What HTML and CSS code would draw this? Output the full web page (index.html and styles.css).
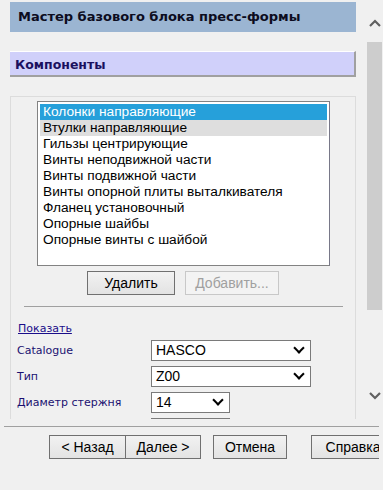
FILE: index.html
```html
<!DOCTYPE html>
<html lang="ru">
<head>
    <meta charset="UTF-8">
    <title>Мастер базового блока пресс-формы</title>
    <link rel="stylesheet" href="styles.css">
</head>
<body>
    <div class="top">
        <div class="main">
            <div class="title">Мастер базового блока пресс-формы</div>
            <div class="section">Компоненты</div>
            <div class="panel">
                <div class="listbox">
                    <div class="item selected">Колонки направляющие</div>
                    <div class="item hover">Втулки направляющие</div>
                    <div class="item">Гильзы центрирующие</div>
                    <div class="item">Винты неподвижной части</div>
                    <div class="item">Винты подвижной части</div>
                    <div class="item">Винты опорной плиты выталкивателя</div>
                    <div class="item">Фланец установочный</div>
                    <div class="item">Опорные шайбы</div>
                    <div class="item">Опорные винты с шайбой</div>
                </div>
                <div class="list-buttons">
                    <button class="btn btn-del">Удалить</button>
                    <button class="btn btn-add" disabled>Добавить...</button>
                </div>
                <div class="sep"></div>
                <a class="show-link" href="#">Показать</a>
                <div class="field">
                    <span class="label">Catalogue</span>
                    <div class="select wide">HASCO<span class="chev"></span></div>
                </div>
                <div class="field">
                    <span class="label">Тип</span>
                    <div class="select wide">Z00<span class="chev"></span></div>
                </div>
                <div class="field">
                    <span class="label">Диаметр стержня</span>
                    <div class="select narrow">14<span class="chev"></span></div>
                </div>
                <div class="field">
                    <span class="label"></span>
                    <div class="select narrow"></div>
                </div>
            </div>
        </div>
        <div class="scrollbar">
            <svg class="arrow up" width="12" height="8" viewBox="0 0 12 8"><path d="M1 7 L6 2 L11 7" fill="none" stroke="#606060" stroke-width="2.2"/></svg>
            <div class="track"><div class="thumb"></div></div>
            <svg class="arrow down" width="12" height="8" viewBox="0 0 12 8"><path d="M1 1 L6 6 L11 1" fill="none" stroke="#606060" stroke-width="2.2"/></svg>
        </div>
    </div>
    <div class="footer">
        <div class="footer-line"></div>
        <div class="footer-buttons">
            <button class="btn fbtn">&lt; Назад</button>
            <button class="btn fbtn next">Далее &gt;</button>
            <button class="btn fbtn cancel">Отмена</button>
            <button class="btn fbtn help">Справка</button>
        </div>
    </div>
</body>
</html>
```

FILE: styles.css
```css
body {
    margin: 0;
    background-color: #f0f0f0;
    font-family: "Liberation Sans", Arial, sans-serif;
    width: 383px;
    height: 490px;
    overflow: hidden;
}
.top {
    display: flex;
    height: 419px;
}
.main {
    width: 346px;
    flex-shrink: 0;
    padding: 2px 10px 0 10px;
    overflow: hidden;
}
.title {
    height: 30px;
    line-height: 30px;
    padding-left: 8px;
    background-color: #9bb5d2;
    color: #0c0c20;
    font-family: "DejaVu Sans", Verdana, sans-serif;
    font-weight: bold;
    font-size: 13px;
}
.section {
    margin-top: 19px;
    height: 26px;
    line-height: 25px;
    padding-left: 5px;
    box-sizing: border-box;
    background-color: #d0d0fa;
    border-top: 1px solid #ffffff;
    border-bottom: 2px solid #a0a0a0;
    border-right: 2px solid #a0a0a0;
    color: #1a1060;
    font-family: "DejaVu Sans", Verdana, sans-serif;
    font-weight: bold;
    font-size: 12.5px;
}
.panel {
    margin-top: 19px;
    border: 1px solid #dcdcdc;
    border-bottom: none;
    padding-top: 4px;
    height: 330px;
}
.listbox {
    margin-left: 26px;
    width: 293px;
    height: 165px;
    box-sizing: border-box;
    border: 1px solid #828282;
    border-right-color: #787888;
    background-color: #ffffff;
    padding: 2px;
}
.item {
    height: 16px;
    line-height: 16px;
    padding-left: 3px;
    font-size: 13.7px;
    color: #000;
}
.item.selected {
    background-color: #26a0da;
    color: #ffffff;
}
.item.hover {
    background-color: #dedede;
}
.list-buttons {
    display: flex;
    justify-content: center;
    gap: 10px;
    margin-top: 5px;
}
.btn {
    height: 24px;
    padding: 0;
    border: 1px solid #707070;
    background: linear-gradient(#f2f2f2, #e3e3e3);
    font-family: "Liberation Sans", Arial, sans-serif;
    font-size: 14px;
    color: #000;
}
.btn-del {
    width: 88px;
}
.btn-add {
    width: 94px;
    border-color: #c8c8c8;
    background: #f3f3f3;
    color: #a0a0a0;
}
.sep {
    margin: 11px 12px 0 13px;
    border-top: 1px solid #a0a0a0;
}
.show-link {
    display: block;
    margin: 15px 0 0 7px;
    font-family: "DejaVu Sans", Verdana, sans-serif;
    font-size: 11px;
    color: #1a0d8a;
    height: 13px;
}
.field {
    display: flex;
    align-items: center;
    margin-top: 5px;
    height: 21px;
}
.label {
    width: 134px;
    padding-left: 6px;
    font-family: "DejaVu Sans", Verdana, sans-serif;
    font-size: 11px;
    color: #1a1070;
}
.select {
    position: relative;
    height: 21px;
    box-sizing: border-box;
    border: 1px solid #7a7a7a;
    background-color: #ffffff;
    font-size: 14px;
    line-height: 19px;
    padding-left: 4px;
    color: #000;
}
.select.wide {
    width: 160px;
}
.select.narrow {
    width: 79px;
}
.chev {
    position: absolute;
    right: 7px;
    top: 3px;
    width: 6px;
    height: 6px;
    border-right: 2px solid #000;
    border-bottom: 2px solid #000;
    transform: rotate(45deg);
}
.scrollbar {
    width: 17px;
    flex-shrink: 0;
    display: flex;
    flex-direction: column;
    align-items: center;
}
.arrow {
    flex-shrink: 0;
}
.arrow.up {
    margin-top: 19px;
}
.arrow.down {
    margin-bottom: 19px;
}
.track {
    flex: 1;
    width: 15px;
    padding-top: 15px;
}
.thumb {
    height: 268px;
    background-color: #cdcdcd;
}
.footer {
    width: 379px;
    overflow: hidden;
}
.footer-line {
    margin: 7px 0 0 4px;
    border-top: 1px solid #a0a0a0;
}
.footer-buttons {
    display: flex;
    margin-top: 8px;
    padding-left: 49px;
}
.fbtn {
    width: 77px;
    flex-shrink: 0;
}
.fbtn.next {
    width: 75px;
    border-left: none;
}
.fbtn.cancel {
    width: 74px;
    margin-left: 12px;
}
.fbtn.help {
    width: 84px;
    margin-left: 24px;
}
```
